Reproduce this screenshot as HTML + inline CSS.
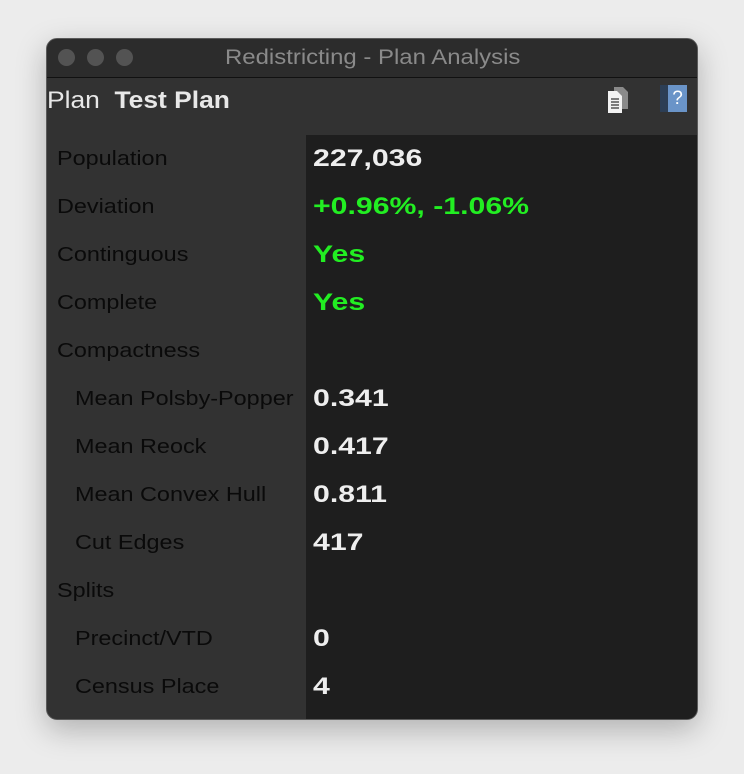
<!DOCTYPE html>
<html><head><style>
body{margin:0;width:744px;height:774px;background:#ececec;position:relative;font-family:"Liberation Sans",sans-serif;overflow:hidden}
.win{position:absolute;left:46px;top:38px;width:652px;height:682px;background:#323232;border-radius:11px;border:1px solid #5a5a5a;box-sizing:border-box;overflow:hidden;box-shadow:0 10px 30px rgba(0,0,0,.25)}
.tb{position:absolute;left:0;top:0;width:100%;height:38px;background:#2c2c2c;border-bottom:1px solid #111}
.dot{position:absolute;top:10px;width:17px;height:17px;border-radius:50%;background:#535353}
.title{position:absolute;left:178px;top:7px;color:#8a8a8a;font-size:21px;transform:scaleX(1.14);transform-origin:left;white-space:nowrap}
.plan{position:absolute;left:0;top:48px;font-size:24px;color:#e8e8e8;transform:scaleX(1.1);transform-origin:left;white-space:nowrap}
.right{position:absolute;left:259px;top:96px;right:0;bottom:0;background:#1e1e1e}
.row{position:absolute;left:0;width:100%;height:48px;line-height:48px}
.l{position:absolute;left:10px;color:#0a0a0a;font-size:20px;transform:scaleX(1.17);transform-origin:left;white-space:nowrap}
.l.i{left:28px}
.v{position:absolute;left:266px;color:#eeeeee;font-size:24px;font-weight:bold;transform:scaleX(1.26);transform-origin:left;white-space:nowrap}
.g{color:#22ee22}
</style></head><body>
<div class="win">
<div class="tb"><div class="dot" style="left:11px"></div><div class="dot" style="left:40px"></div><div class="dot" style="left:69px"></div><div class="title">Redistricting - Plan Analysis</div></div>
<div class="plan">Plan&nbsp; <b>Test Plan</b></div>
<svg style="position:absolute;left:558px;top:47px" width="26" height="28" viewBox="0 0 26 28"><path d="M9 1h9l5 5v17H9z" fill="#8a8a8a"/><path d="M3 5h9l5 5v17H3z" fill="#f2f2f2"/><path d="M6 13h8M6 16h8M6 19h8M6 22h8" stroke="#555" stroke-width="1.4"/></svg>
<div style="position:absolute;left:613px;top:46px;width:27px;height:27px;background:#6a94c8;border-left:8px solid #2c3e55;box-sizing:border-box;color:#fff;font-size:19px;text-align:center;line-height:27px">?</div>
<div class="right"></div>
<div class="row" style="top:96px"><span class="l">Population</span><span class="v">227,036</span></div>
<div class="row" style="top:144px"><span class="l">Deviation</span><span class="v g">+0.96%, -1.06%</span></div>
<div class="row" style="top:192px"><span class="l">Continguous</span><span class="v g">Yes</span></div>
<div class="row" style="top:240px"><span class="l">Complete</span><span class="v g">Yes</span></div>
<div class="row" style="top:288px"><span class="l">Compactness</span></div>
<div class="row" style="top:336px"><span class="l i">Mean Polsby-Popper</span><span class="v">0.341</span></div>
<div class="row" style="top:384px"><span class="l i">Mean Reock</span><span class="v">0.417</span></div>
<div class="row" style="top:432px"><span class="l i">Mean Convex Hull</span><span class="v">0.811</span></div>
<div class="row" style="top:480px"><span class="l i">Cut Edges</span><span class="v">417</span></div>
<div class="row" style="top:528px"><span class="l">Splits</span></div>
<div class="row" style="top:576px"><span class="l i">Precinct/VTD</span><span class="v">0</span></div>
<div class="row" style="top:624px"><span class="l i">Census Place</span><span class="v">4</span></div>
</div>
</body></html>
